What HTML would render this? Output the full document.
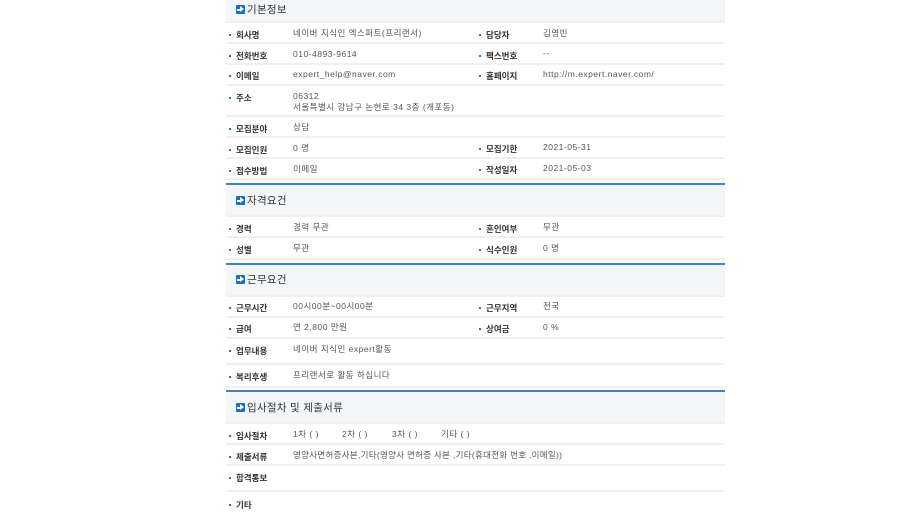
<!DOCTYPE html>
<html><head><meta charset="utf-8"><style>
body{margin:0;width:920px;height:518px;background:#fff;position:relative;overflow:hidden;font-family:"Liberation Sans","Noto Sans CJK KR",sans-serif;}
.hd{position:absolute;left:226px;width:499px;background:#f3f6f9;}
.bl{position:absolute;left:226px;width:499px;height:2px;background:#3d84c6;}
.ln{position:absolute;left:226px;width:499px;height:2px;background:#eef0f2;}
.ht{position:absolute;font-size:10.5px;color:#333;line-height:12px;white-space:nowrap;letter-spacing:0.3px;}
.ic{position:absolute;width:9px;height:9px;background:#1a6fc0;border-radius:1px;}
.ic:after{content:"";position:absolute;left:1px;top:3.5px;width:4px;height:2px;background:#fff;}
.ic:before{content:"";position:absolute;left:4px;top:1px;border-left:4px solid #fff;border-top:3.5px solid transparent;border-bottom:3.5px solid transparent;}
.lb{position:absolute;font-size:8.5px;font-weight:bold;color:#333;line-height:12px;white-space:nowrap;}
.lb:before{content:"";position:absolute;left:-7px;top:5px;width:2px;height:2px;background:#2a74c0;}
.v{position:absolute;font-size:8.5px;color:#555;line-height:11px;white-space:nowrap;letter-spacing:0.5px;}
</style></head><body>
<div class="hd" style="top:0;height:21px"></div>
<div class="ic" style="left:236px;top:5px"></div><div class="ht" style="left:247px;top:4px">기본정보</div>
<div class="ln" style="top:21px"></div>
<div class="lb" style="left:236px;top:29px">회사명</div><div class="v" style="left:293px;top:28px">네이버 지식인 엑스퍼트(프리랜서)</div>
<div class="lb" style="left:486px;top:29px">담당자</div><div class="v" style="left:543px;top:28px">김영빈</div>
<div class="ln" style="top:42px"></div>
<div class="lb" style="left:236px;top:50px">전화번호</div><div class="v" style="left:293px;top:49px">010-4893-9614</div>
<div class="lb" style="left:486px;top:50px">팩스번호</div><div class="v" style="left:543px;top:48px">--</div>
<div class="ln" style="top:63px"></div>
<div class="lb" style="left:236px;top:70px">이메일</div><div class="v" style="left:293px;top:69px">expert_help@naver.com</div>
<div class="lb" style="left:486px;top:70px">홈페이지</div><div class="v" style="left:543px;top:69px">http://m.expert.naver.com/</div>
<div class="ln" style="top:84px"></div>
<div class="lb" style="left:236px;top:92px">주소</div><div class="v" style="left:293px;top:91px">06312<br>서울특별시 강남구 논현로 34 3층 (개포동)</div>
<div class="ln" style="top:115px"></div>
<div class="lb" style="left:236px;top:123px">모집분야</div><div class="v" style="left:293px;top:122px">상담</div>
<div class="ln" style="top:136px"></div>
<div class="lb" style="left:236px;top:144px">모집인원</div><div class="v" style="left:293px;top:143px">0 명</div>
<div class="lb" style="left:486px;top:143px">모집기한</div><div class="v" style="left:543px;top:142px">2021-05-31</div>
<div class="ln" style="top:157px"></div>
<div class="lb" style="left:236px;top:165px">접수방법</div><div class="v" style="left:293px;top:164px">이메일</div>
<div class="lb" style="left:486px;top:164px">작성일자</div><div class="v" style="left:543px;top:163px">2021-05-03</div>
<div class="ln" style="top:178px"></div>

<div class="bl" style="top:183px"></div>
<div class="hd" style="top:185px;height:30px"></div>
<div class="ic" style="left:236px;top:196px"></div><div class="ht" style="left:247px;top:195px">자격요건</div>
<div class="ln" style="top:215px"></div>
<div class="lb" style="left:236px;top:223px">경력</div><div class="v" style="left:293px;top:222px">경력 무관</div>
<div class="lb" style="left:486px;top:223px">혼인여부</div><div class="v" style="left:543px;top:222px">무관</div>
<div class="ln" style="top:236px"></div>
<div class="lb" style="left:236px;top:244px">성별</div><div class="v" style="left:293px;top:243px">무관</div>
<div class="lb" style="left:486px;top:244px">식수인원</div><div class="v" style="left:543px;top:243px">0 명</div>
<div class="ln" style="top:258px"></div>

<div class="bl" style="top:263px"></div>
<div class="hd" style="top:265px;height:30px"></div>
<div class="ic" style="left:236px;top:275px"></div><div class="ht" style="left:247px;top:274px">근무요건</div>
<div class="ln" style="top:295px"></div>
<div class="lb" style="left:236px;top:302px">근무시간</div><div class="v" style="left:293px;top:301px">00시00분~00시00분</div>
<div class="lb" style="left:486px;top:302px">근무지역</div><div class="v" style="left:543px;top:301px">전국</div>
<div class="ln" style="top:316px"></div>
<div class="lb" style="left:236px;top:323px">급여</div><div class="v" style="left:293px;top:322px">연 2,800 만원</div>
<div class="lb" style="left:486px;top:323px">상여금</div><div class="v" style="left:543px;top:322px">0 %</div>
<div class="ln" style="top:337px"></div>
<div class="lb" style="left:236px;top:345px">업무내용</div><div class="v" style="left:293px;top:344px">네이버 지식인 expert활동</div>
<div class="ln" style="top:363px"></div>
<div class="lb" style="left:236px;top:371px">복리후생</div><div class="v" style="left:293px;top:370px">프리랜서로 활동 하십니다</div>
<div class="ln" style="top:386px"></div>

<div class="bl" style="top:390px"></div>
<div class="hd" style="top:392px;height:30px"></div>
<div class="ic" style="left:236px;top:403px"></div><div class="ht" style="left:247px;top:402px">입사절차 및 제출서류</div>
<div class="ln" style="top:422px"></div>
<div class="lb" style="left:236px;top:430px">입사절차</div>
<div class="v" style="left:293px;top:429px">1차 ( )</div><div class="v" style="left:342px;top:429px">2차 ( )</div><div class="v" style="left:392px;top:429px">3차 ( )</div><div class="v" style="left:441px;top:429px">기타 ( )</div>
<div class="ln" style="top:443px"></div>
<div class="lb" style="left:236px;top:451px">제출서류</div><div class="v" style="left:293px;top:450px;letter-spacing:0.3px">영양사면허증사본,기타(영양사 면허증 사본 ,기타(휴대전화 번호 ,이메일))</div>
<div class="ln" style="top:464px"></div>
<div class="lb" style="left:236px;top:472px">합격통보</div>
<div class="ln" style="top:490px"></div>
<div class="lb" style="left:236px;top:499px">기타</div>
</body></html>
